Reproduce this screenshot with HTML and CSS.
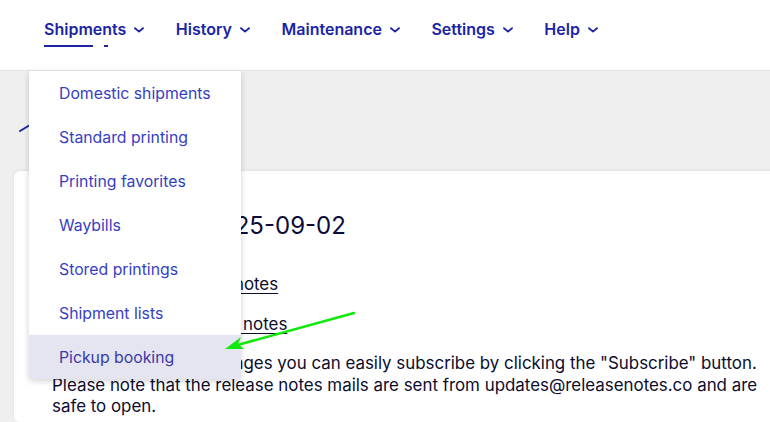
FILE: index.html
```html
<!DOCTYPE html>
<html lang="en">
<head>
<meta charset="utf-8">
<title>Release notes</title>
<link rel="stylesheet" href="styles.css">
</head>
<body>
<header class="topbar">
  <nav class="mainnav">
    <div class="navitem active">
      <span class="navlabel">Shipments</span>
      <svg class="chev" viewBox="0 0 10 6" width="10" height="6"><path d="M1 1.2 L5 4.6 L9 1.2" fill="none" stroke="currentColor" stroke-width="1.8" stroke-linecap="round" stroke-linejoin="round"/></svg>
      <span class="bar bar-main"></span><span class="bar bar-dot"></span>
    </div>
    <div class="navitem">
      <span class="navlabel">History</span>
      <svg class="chev" viewBox="0 0 10 6" width="10" height="6"><path d="M1 1.2 L5 4.6 L9 1.2" fill="none" stroke="currentColor" stroke-width="1.8" stroke-linecap="round" stroke-linejoin="round"/></svg>
    </div>
    <div class="navitem">
      <span class="navlabel">Maintenance</span>
      <svg class="chev" viewBox="0 0 10 6" width="10" height="6"><path d="M1 1.2 L5 4.6 L9 1.2" fill="none" stroke="currentColor" stroke-width="1.8" stroke-linecap="round" stroke-linejoin="round"/></svg>
    </div>
    <div class="navitem">
      <span class="navlabel">Settings</span>
      <svg class="chev" viewBox="0 0 10 6" width="10" height="6"><path d="M1 1.2 L5 4.6 L9 1.2" fill="none" stroke="currentColor" stroke-width="1.8" stroke-linecap="round" stroke-linejoin="round"/></svg>
    </div>
    <div class="navitem">
      <span class="navlabel">Help</span>
      <svg class="chev" viewBox="0 0 10 6" width="10" height="6"><path d="M1 1.2 L5 4.6 L9 1.2" fill="none" stroke="currentColor" stroke-width="1.8" stroke-linecap="round" stroke-linejoin="round"/></svg>
    </div>
  </nav>
</header>

<main class="page">
  <div class="titlerow">
    <svg class="crumb" viewBox="0 0 12 8" width="12" height="8"><path d="M1 7 L11 1" fill="none" stroke="#1b24a6" stroke-width="2" stroke-linecap="round"/></svg>
  </div>
  <section class="card">
    <h1 class="card-title">Release note 2025-09-02</h1>
    <p class="linkline"><a href="#">Read all of the release notes</a></p>
    <p class="linkline"><a href="#">Subscribe to all release notes</a></p>
    <p class="info">To get informed of changes you can easily subscribe by clicking the "Subscribe" button.<br>Please note that the release notes mails are sent from updates@releasenotes.co and are<br>safe to open.</p>
  </section>
</main>

<ul class="dropdown">
  <li class="dd-item">Domestic shipments</li>
  <li class="dd-item">Standard printing</li>
  <li class="dd-item">Printing favorites</li>
  <li class="dd-item">Waybills</li>
  <li class="dd-item">Stored printings</li>
  <li class="dd-item">Shipment lists</li>
  <li class="dd-item hover">Pickup booking</li>
</ul>

<svg class="pointer" viewBox="0 0 770 422" width="770" height="422">
  <line x1="354" y1="313" x2="234" y2="346" stroke="#11e80c" stroke-width="2.6" stroke-linecap="round"/>
  <path d="M225 349 L241 337 L238 344 L244 349 Z" fill="#11e80c"/>
</svg>
</body>
</html>
```

FILE: styles.css
```css
* { box-sizing: border-box; }
html, body { margin: 0; padding: 0; }
body {
  width: 770px;
  height: 422px;
  overflow: hidden;
  background: #efefef;
  font-family: Inter, "Noto Sans", sans-serif;
  color: #0c0c2e;
  position: relative;
}
.topbar {
  height: 71px;
  background: #ffffff;
  border-bottom: 1px solid #e4e4e4;
}
.mainnav {
  display: flex;
  padding-left: 44px;
  height: 70px;
  align-items: flex-start;
}
.navitem {
  position: relative;
  display: flex;
  align-items: center;
  gap: 8px;
  padding-top: 19px;
  margin-right: 31.5px;
  color: #1b24a6;
  font-weight: 600;
  font-size: 16px;
  line-height: 20px;
}
.navitem .chev { margin-top: 1px; }
.bar {
  position: absolute;
  top: 45px;
  height: 2px;
  background: #1b24a6;
}
.bar-main { left: 0; width: 49px; }
.bar-dot { left: 60px; width: 4px; }

.titlerow {
  height: 100px;
  padding: 53px 0 0 19px;
}
.crumb { display: block; }
.card {
  margin-left: 14px;
  width: 780px;
  height: 251px;
  background: #ffffff;
  border-radius: 6px;
  box-shadow: 0 -1px 3px rgba(0,0,0,0.06);
  padding: 39px 0 0 38px;
}
.card-title {
  margin: 0 0 31px;
  font-size: 24px;
  font-weight: 400;
  line-height: 32px;
  color: #0c0c3a;
}
.linkline {
  margin: 0 0 18px;
  font-size: 16.9px;
  line-height: 22px;
}
.linkline a { color: #0c0c2e; text-decoration: underline; text-underline-offset: 3px; }
.info {
  margin: 11px 0 0;
  font-size: 16.9px;
  line-height: 21.5px;
  color: #0c0c2e;
}

.dropdown {
  position: absolute;
  left: 29px;
  top: 71px;
  width: 212px;
  margin: 0;
  padding: 0;
  list-style: none;
  background: #ffffff;
  box-shadow: 0 2px 6px rgba(0,0,0,0.18);
  border-radius: 0 0 3px 3px;
}
.dd-item {
  height: 44px;
  padding-left: 30px;
  display: flex;
  align-items: center;
  font-size: 15.8px;
  color: #3640c2;
}
.dd-item.hover {
  background: #e4e5f1;
  color: #3a3aa8;
}
.pointer {
  position: absolute;
  left: 0;
  top: 0;
  pointer-events: none;
}
```
